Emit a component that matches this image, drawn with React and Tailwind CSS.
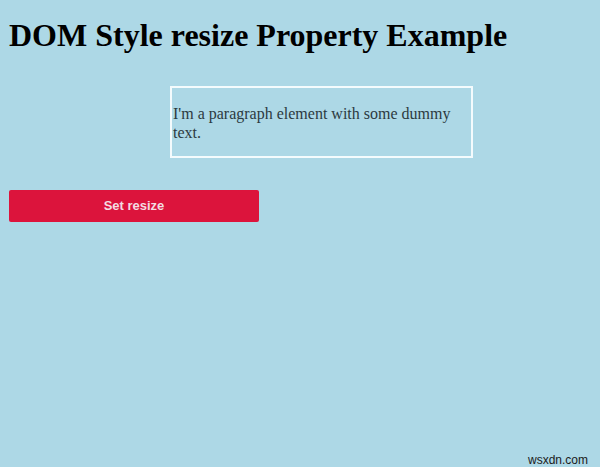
import React from "react";

const App = () => {
  return (
    <div className="relative w-[600px] h-[467px] bg-[#add8e6] overflow-hidden">
      <div className="px-[9px] pt-[17px]">
        <h1 className="text-[32px] leading-[37px] font-bold text-black font-['Liberation_Serif',serif]">
          DOM Style resize Property Example
        </h1>

        {/* Paragraph box */}
        <div className="ml-[161px] mt-[32px] w-[303px] h-[72px] border-2 border-[#f4fbfd] pt-[16px] px-[1px]">
          <p className="text-[16px] leading-[19px] text-[#2c3a3f] font-['Liberation_Serif',serif]">
            I'm a paragraph element with some dummy text.
          </p>
        </div>

        {/* Button */}
        <button className="mt-[32px] w-[250px] h-[32px] rounded-[2px] bg-[#dc143c] text-[#f3dde2] text-[13px] font-bold font-['Liberation_Sans',sans-serif]">
          Set resize
        </button>
      </div>

      <div className="absolute right-[12px] bottom-[-1px] text-[12px] leading-[16px] text-[#1a1a1a] font-['Liberation_Sans',sans-serif]">
        wsxdn.com
      </div>
    </div>
  );
};

export default App;
